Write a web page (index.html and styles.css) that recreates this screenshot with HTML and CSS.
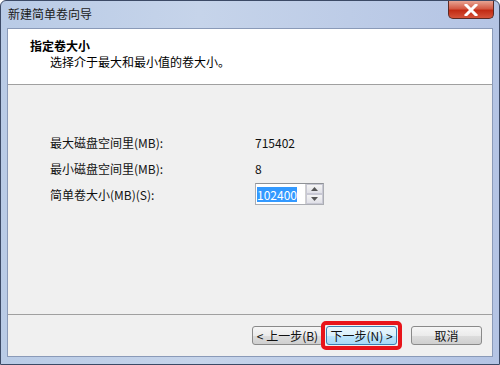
FILE: index.html
```html
<!DOCTYPE html>
<html>
<head>
    <meta charset="utf-8">
    <link rel="stylesheet" href="styles.css">
</head>
<body>
    <div class="window">
        <div class="titlebar">
            <div class="title">新建简单卷向导</div>
            <div class="close-btn">
                <svg width="14" height="12" viewBox="0 0 14 12">
                    <path d="M2 1 L12 11 M12 1 L2 11" stroke="#fff" stroke-width="3" stroke-linecap="square"/>
                </svg>
            </div>
        </div>

        <div class="client">
            <div class="header">
                <div class="header-title">指定卷大小</div>
                <div class="header-sub">选择介于最大和最小值的卷大小。</div>
            </div>

            <div class="body">
                <div class="form">
                    <div class="label">最大磁盘空间里(MB):</div>
                    <div class="value">715402</div>

                    <div class="label">最小磁盘空间里(MB):</div>
                    <div class="value">8</div>

                    <div class="label">简单卷大小(MB)(S):</div>
                    <div class="spin">
                        <div class="spin-field"><span class="selected">102400</span></div>
                        <div class="spin-buttons">
                            <div class="spin-btn">
                                <svg width="7" height="4" viewBox="0 0 7 4"><path d="M0 4 L3.5 0 L7 4 Z" fill="#555"/></svg>
                            </div>
                            <div class="spin-btn">
                                <svg width="7" height="4" viewBox="0 0 7 4"><path d="M0 0 L3.5 4 L7 0 Z" fill="#555"/></svg>
                            </div>
                        </div>
                    </div>
                </div>
            </div>

            <div class="footer">
                <button class="btn">&lt; 上一步(B)</button>
                <div class="highlight">
                    <button class="btn btn-default">下一步(N) &gt;</button>
                </div>
                <button class="btn btn-cancel">取消</button>
            </div>
        </div>
    </div>
</body>
</html>
```

FILE: styles.css
```css
body {
    margin: 0;
    font-family: "Noto Sans CJK SC", "Liberation Sans", sans-serif;
    font-size: 12px;
    color: #000;
    background: #fff;
}

.window {
    width: 500px;
    height: 365px;
    box-sizing: border-box;
    display: flex;
    flex-direction: column;
    background: linear-gradient(to right, #b9cbe6 0%, #c6d4ea 40%, #b4c4e4 100%);
    border: 1px solid #3c4a66;
    border-radius: 6px 6px 0 0;
}

.titlebar {
    height: 27px;
    display: flex;
    align-items: flex-start;
    justify-content: space-between;
    flex-shrink: 0;
}

.title {
    margin: 4px 0 0 7px;
    font-size: 12px;
    line-height: 18px;
    color: #1a1a1a;
}

.close-btn {
    width: 46px;
    height: 18px;
    margin-right: 5px;
    display: flex;
    align-items: center;
    justify-content: center;
    background: linear-gradient(to bottom, #e8a493 0%, #d45a44 45%, #c22b14 55%, #d5533a 100%);
    border: 1px solid #5c2a24;
    border-top: none;
    border-radius: 0 0 5px 5px;
    box-sizing: border-box;
}

.client {
    flex: 1;
    margin: 0 6px 7px 6px;
    display: flex;
    flex-direction: column;
    background: #f0f0f0;
    border: 1px solid #8a9ab8;
}

.header {
    height: 56px;
    background: #fff;
    border-bottom: 1px solid #a0a0a0;
    box-sizing: border-box;
    flex-shrink: 0;
}

.header-title {
    margin: 9px 0 0 22px;
    font-weight: bold;
    line-height: 16px;
}

.header-sub {
    margin: 0 0 0 42px;
    line-height: 16px;
}

.body {
    flex: 1;
    padding: 44px 0 0 42px;
}

.form {
    display: grid;
    grid-template-columns: 205px auto;
    grid-auto-rows: 26px;
    align-items: center;
}

.label {
    color: #111;
}

.value {
    color: #111;
}

.spin {
    display: flex;
    width: 69px;
    height: 22px;
    box-sizing: border-box;
    border: 1px solid #abadb3;
    border-top-color: #8e9196;
    background: #fff;
}

.spin-field {
    flex: 1;
    display: flex;
    align-items: center;
    padding-left: 1px;
}

.selected {
    background: #3399ff;
    color: #fff;
    line-height: 15px;
}

.spin-buttons {
    width: 17px;
    display: flex;
    flex-direction: column;
    border-left: 1px solid #d0d0d0;
}

.spin-btn {
    flex: 1;
    display: flex;
    align-items: center;
    justify-content: center;
    background: linear-gradient(to bottom, #f4f4f4, #e0e0e8);
    border: 1px solid #c8c8d4;
}

.footer {
    height: 42px;
    border-top: 1px solid #a0a0a0;
    box-sizing: border-box;
    display: flex;
    align-items: center;
    justify-content: flex-end;
    padding-right: 10px;
    flex-shrink: 0;
}

.btn {
    width: 71px;
    height: 19px;
    padding: 0;
    font-family: "Noto Sans CJK SC", "Liberation Sans", sans-serif;
    font-size: 12px;
    line-height: 15px;
    color: #111;
    border: 1px solid #8a8a8a;
    border-radius: 3px;
    background: linear-gradient(to bottom, #f6f6f6 0%, #ebebeb 50%, #dddddd 51%, #cfcfcf 100%);
}

.highlight {
    display: flex;
    padding: 1px;
    border: 4px solid #e8141a;
    border-radius: 5px;
    margin-left: -2px;
}

.btn-default {
    border-color: #3c7fb1;
    background: linear-gradient(to bottom, #eaf6fd 0%, #d9f0fc 50%, #bee6fd 51%, #a7d9f5 100%);
}

.btn-cancel {
    margin-left: 9px;
}
```
